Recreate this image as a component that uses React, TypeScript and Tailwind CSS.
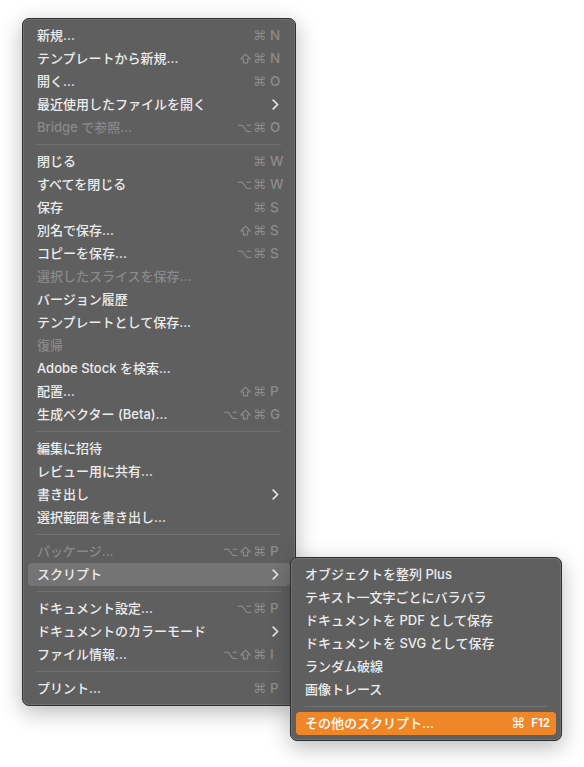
import type { ReactNode } from 'react';

type Item =
  | { sep: true }
  | {
      sep?: false;
      label: string;
      mods?: string[];
      keyName?: string;
      sub?: boolean;
      disabled?: boolean;
      active?: boolean;
    };

const fileMenu: Item[] = [
  { label: '新規...', mods: ['⌘'], keyName: 'N' },
  { label: 'テンプレートから新規...', mods: ['⇧', '⌘'], keyName: 'N' },
  { label: '開く...', mods: ['⌘'], keyName: 'O' },
  { label: '最近使用したファイルを開く', sub: true },
  { label: 'Bridge で参照...', mods: ['⌥', '⌘'], keyName: 'O', disabled: true },
  { sep: true },
  { label: '閉じる', mods: ['⌘'], keyName: 'W' },
  { label: 'すべてを閉じる', mods: ['⌥', '⌘'], keyName: 'W' },
  { label: '保存', mods: ['⌘'], keyName: 'S' },
  { label: '別名で保存...', mods: ['⇧', '⌘'], keyName: 'S' },
  { label: 'コピーを保存...', mods: ['⌥', '⌘'], keyName: 'S' },
  { label: '選択したスライスを保存...', disabled: true },
  { label: 'バージョン履歴' },
  { label: 'テンプレートとして保存...' },
  { label: '復帰', disabled: true },
  { label: 'Adobe Stock を検索...' },
  { label: '配置...', mods: ['⇧', '⌘'], keyName: 'P' },
  { label: '生成ベクター (Beta)...', mods: ['⌥', '⇧', '⌘'], keyName: 'G' },
  { sep: true },
  { label: '編集に招待' },
  { label: 'レビュー用に共有...' },
  { label: '書き出し', sub: true },
  { label: '選択範囲を書き出し...' },
  { sep: true },
  { label: 'パッケージ...', mods: ['⌥', '⇧', '⌘'], keyName: 'P', disabled: true },
  { label: 'スクリプト', sub: true, active: true },
  { sep: true },
  { label: 'ドキュメント設定...', mods: ['⌥', '⌘'], keyName: 'P' },
  { label: 'ドキュメントのカラーモード', sub: true },
  { label: 'ファイル情報...', mods: ['⌥', '⇧', '⌘'], keyName: 'I' },
  { sep: true },
  { label: 'プリント...', mods: ['⌘'], keyName: 'P' },
];

const scripts = [
  'オブジェクトを整列 Plus',
  'テキスト一文字ごとにバラバラ',
  'ドキュメントを PDF として保存',
  'ドキュメントを SVG として保存',
  'ランダム破線',
  '画像トレース',
];

const font = 'font-["Inter","Noto_Sans_CJK_JP",sans-serif]';

function Chevron() {
  return (
    <svg width="7" height="11" viewBox="0 0 7 11" className="mr-px">
      <path
        d="M1.2 1.2 L5.6 5.5 L1.2 9.8"
        fill="none"
        stroke="#e6e6e6"
        strokeWidth="1.7"
        strokeLinecap="round"
        strokeLinejoin="round"
      />
    </svg>
  );
}

// shift key drawn as outlined arrow, the font glyph is too thin
function ShiftIcon() {
  return (
    <svg width="11" height="11" viewBox="0 0 11 11" className="mx-px">
      <path
        d="M5.5 1.2 L10.2 6 H7.6 V9.8 H3.4 V6 H0.8 Z"
        fill="none"
        stroke="#8c8c8c"
        strokeWidth="1.2"
        strokeLinejoin="round"
      />
    </svg>
  );
}

function Shortcut({ mods, keyName }: { mods: string[]; keyName: string }) {
  return (
    <div className="flex items-center text-[#8c8c8c]">
      <div className='flex items-center gap-[1px] font-["DejaVu_Sans",sans-serif] text-[13px]'>
        {mods.map((m, i) => (m === '⇧' ? <ShiftIcon key={i} /> : <span key={i}>{m}</span>))}
      </div>
      <span className="ml-[4px] w-[10px] whitespace-nowrap text-[13.5px]">{keyName}</span>
    </div>
  );
}

function Panel({ className, children }: { className?: string; children: ReactNode }) {
  return (
    <div
      className={`rounded-[7px] border border-[#2e2e2e] bg-[#5f5f5f] p-[5px] shadow-[inset_0_0_0_1px_rgba(255,255,255,0.12),0_6px_22px_rgba(0,0,0,0.28)] ${className ?? ''}`}
    >
      {children}
    </div>
  );
}

function ScriptsMenu() {
  return (
    <Panel className="absolute top-[-6px] left-[262px] z-10 w-[272px]">
      {scripts.map((s) => (
        <div key={s} className="flex h-[23px] items-center px-[9px] text-[13px] text-[#ececec]">
          {s}
        </div>
      ))}
      <div className="flex h-[11px] items-center px-[9px]">
        <div className="h-px w-full bg-[#727272]" />
      </div>
      <div className="flex h-[23px] items-center justify-between rounded-[4px] bg-[#ef8729] pr-[6px] pl-[9px] text-[13px] text-white">
        <span>その他のスクリプト...</span>
        <span className="flex items-center gap-[6px] font-semibold">
          <span className='font-["DejaVu_Sans",sans-serif] text-[14px] font-normal'>⌘</span>
          <span className="text-[11.5px]">F12</span>
        </span>
      </div>
    </Panel>
  );
}

export default function App() {
  return (
    <div className={`h-[767px] bg-white pt-[18px] pl-[22px] font-medium ${font}`}>
      <Panel className="w-[274px]">
        {fileMenu.map((item, idx) =>
          item.sep ? (
            <div key={idx} className="flex h-[11px] items-center px-[9px]">
              <div className="h-px w-full bg-[#727272]" />
            </div>
          ) : (
            <div
              key={idx}
              className={`relative flex h-[23px] items-center justify-between rounded-[4px] pr-[10px] pl-[9px] text-[13px] ${
                item.disabled ? 'text-[#8a8a8a]' : 'text-[#ececec]'
              } ${item.active ? 'bg-[#747474]' : ''}`}
            >
              <span className="whitespace-nowrap">{item.label}</span>
              {item.sub ? <Chevron /> : null}
              {item.mods && item.keyName ? (
                <Shortcut mods={item.mods} keyName={item.keyName} />
              ) : null}
              {item.active ? <ScriptsMenu /> : null}
            </div>
          ),
        )}
      </Panel>
    </div>
  );
}
